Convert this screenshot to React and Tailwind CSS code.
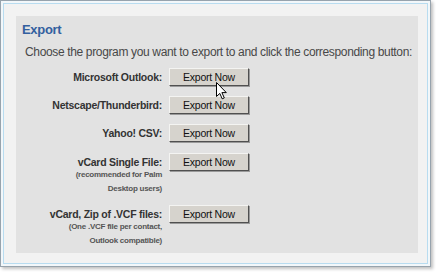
import React from "react";

const rows = [
  { label: "Microsoft Outlook:", note: [], mt: "mt-[9px]" },
  { label: "Netscape/Thunderbird:", note: [], mt: "mt-[10px]" },
  { label: "Yahoo! CSV:", note: [], mt: "mt-[10px]" },
  { label: "vCard Single File:", note: ["(recommended for Palm", "Desktop users)"], mt: "mt-[11px]" },
  { label: "vCard, Zip of .VCF files:", note: ["(One .VCF file per contact,", "Outlook compatible)"], mt: "mt-[9px]" },
];

function Cursor() {
  return (
    <svg
      className="absolute left-[216px] top-[82px] pointer-events-none"
      width="12"
      height="18"
      viewBox="0 0 12 18"
    >
      <path
        d="M0.5 0.5 L0.5 14.5 L3.8 11.4 L6.2 16.8 L8.3 15.9 L5.9 10.6 L10.3 10.6 Z"
        fill="#fff"
        stroke="#000"
        strokeWidth="1"
        strokeLinejoin="round"
      />
    </svg>
  );
}

function ExportButton() {
  return (
    <button className="w-[80px] h-[18px] bg-[#d6d3cd] border border-t-[#f4f4f2] border-l-[#f4f4f2] border-b-[#505050] border-r-[#505050] shadow-[1px_1px_0_#9a9a9a] text-[10.5px] tracking-[-0.25px] leading-none text-[#111] flex items-center justify-center">
      Export Now
    </button>
  );
}

export default function App() {
  return (
    <div className="w-[442px] h-[278px] bg-white relative font-['Liberation_Sans',Arial,sans-serif]">
      <div className="w-[431px] h-[267px] border border-[#97a3ad] bg-[#f2f7fa] p-[2px] shadow-[2px_2px_3px_rgba(0,0,0,0.25)]">
        <div className="h-full border border-[#b8dcf0] bg-[#f2f2f2] pl-[12px] pr-[9px] pt-[12px] pb-[10px]">
          <div className="h-full bg-[#e2e2e2] pt-[6px]">
            <h1 className="pl-[6px] text-[13px] tracking-[-0.3px] leading-[15px] font-bold text-[#33609f]">
              Export
            </h1>
            <p className="pl-[9px] mt-[8px] text-[12px] tracking-[-0.35px] leading-[14px] text-[#484848] whitespace-nowrap">
              Choose the program you want to export to and click the corresponding button:
            </p>
            {rows.map((r) => (
              <div key={r.label} className={"flex items-start gap-[7px] " + r.mt}>
                <div className="w-[146px] text-right">
                  <div className="text-[10.5px] tracking-[-0.25px] leading-[18px] font-bold text-[#333] whitespace-nowrap">
                    {r.label}
                  </div>
                  {r.note.length > 0 && (
                    <div className="-mt-[3px]">
                      {r.note.map((n) => (
                        <div key={n} className="text-[8px] tracking-[-0.25px] leading-[14px] font-bold text-[#555] whitespace-nowrap">
                          {n}
                        </div>
                      ))}
                    </div>
                  )}
                </div>
                <ExportButton />
              </div>
            ))}
          </div>
        </div>
      </div>
      <Cursor />
    </div>
  );
}
